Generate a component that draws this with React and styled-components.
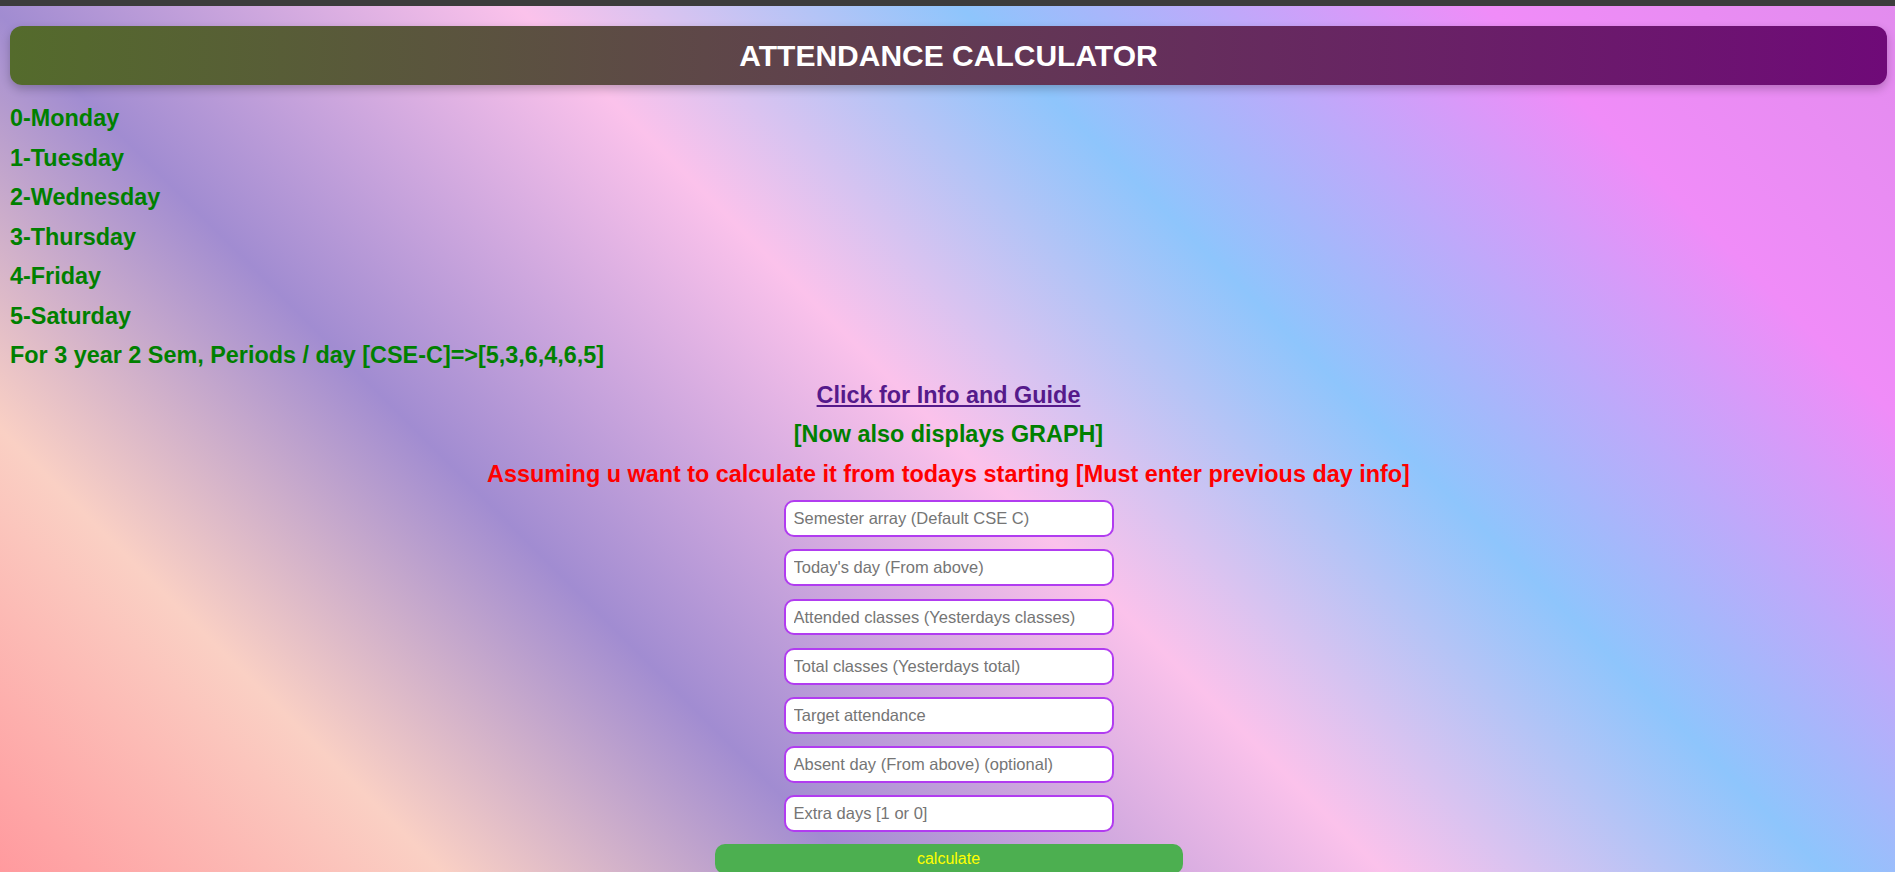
import React, { useState } from "react";
import styled, { createGlobalStyle } from "styled-components";

const GlobalStyle = createGlobalStyle`
  html, body {
    margin: 0;
    padding: 0;
  }
  body {
    font-family: "Liberation Sans", Arial, Helvetica, sans-serif;
    min-height: 100vh;
    background: linear-gradient(
      45deg,
      #ff9a9e 0%,
      #fad0c4 16%,
      #a18cd1 31%,
      #fbc2eb 50%,
      #8ec5fc 66%,
      #f08cf8 85%,
      #e28cee 100%
    ) fixed;
  }
`;

const fields = [
  "Semester array (Default CSE C)",
  "Today's day (From above)",
  "Attended classes (Yesterdays classes)",
  "Total classes (Yesterdays total)",
  "Target attendance",
  "Absent day (From above) (optional)",
  "Extra days [1 or 0]",
];

const days = ["0-Monday", "1-Tuesday", "2-Wednesday", "3-Thursday", "4-Friday", "5-Saturday"];

export default function App() {
  const [values, setValues] = useState(fields.map(() => ""));

  function updateField(i, e) {
    const next = [...values];
    next[i] = e.target.value;
    setValues(next);
  }

  return (
    <>
      <GlobalStyle />
      <TopStrip />
      <Page>
        <Header>ATTENDANCE CALCULATOR</Header>
        <Column>
          {days.map((d) => (
            <Line key={d}>{d}</Line>
          ))}
          <Line>For 3 year 2 Sem, Periods / day [CSE-C]=&gt;[5,3,6,4,6,5]</Line>
          <Line $center>
            <GuideLink href="#guide">Click for Info and Guide</GuideLink>
          </Line>
          <Line $center>[Now also displays GRAPH]</Line>
          <Line $center $color="#ff0000">
            Assuming u want to calculate it from todays starting [Must enter previous day info]
          </Line>
          {fields.map((f, i) => (
            <Field
              key={f}
              placeholder={f}
              value={values[i]}
              onChange={(e) => updateField(i, e)}
            />
          ))}
          <CalcButton>calculate</CalcButton>
        </Column>
      </Page>
    </>
  );
}

const TopStrip = styled.div`
  height: 6px;
  background: #3c3c3c;
`;

const Page = styled.main`
  padding: 20px 8px 0 10px;
`;

const Header = styled.h1`
  margin: 0;
  height: 59px;
  display: flex;
  align-items: center;
  justify-content: center;
  border-radius: 12px;
  background: linear-gradient(to right, #546b2c, #6f0a78);
  box-shadow: 0 4px 10px rgba(0, 0, 0, 0.22);
  color: #ffffff;
  font-size: 30px;
  font-weight: bold;
`;

const Column = styled.div`
  display: flex;
  flex-direction: column;
  gap: 12.5px;
  padding-top: 20.3px;
`;

const Line = styled.h3`
  margin: 0;
  font-size: 23.4px;
  line-height: 27px;
  font-weight: bold;
  color: ${(p) => p.$color || "#008000"};
  text-align: ${(p) => (p.$center ? "center" : "left")};
`;

const GuideLink = styled.a`
  color: #551a8b;
  text-decoration: underline;
`;

const Field = styled.input`
  align-self: center;
  box-sizing: border-box;
  width: 330px;
  height: 36.7px;
  padding: 0 8px;
  border: 2px solid #b13cf0;
  border-radius: 10px;
  background: #ffffff;
  font-family: "Liberation Sans", Arial, sans-serif;
  font-size: 16.5px;
  color: #222;
  outline: none;

  &::placeholder {
    color: #757575;
  }
`;

const CalcButton = styled.button`
  align-self: center;
  width: 468px;
  height: 30px;
  margin-top: -1px;
  border: none;
  border-radius: 10px;
  background: #4caf50;
  color: #ffff00;
  font-family: "Liberation Sans", Arial, sans-serif;
  font-size: 16px;
  cursor: pointer;
`;
